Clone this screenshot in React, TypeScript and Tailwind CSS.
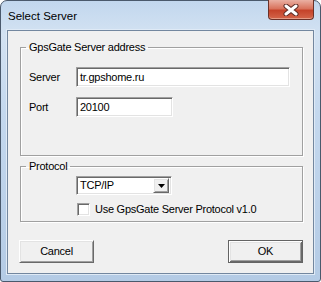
import React from "react";

const sunken =
  "border border-[#a0a0a0] border-b-white border-r-white bg-white shadow-[inset_1px_1px_0_#696969,inset_-1px_-1px_0_#e3e3e3]";

const raised =
  "border border-white border-b-[#696969] border-r-[#696969] bg-[#f0f0f0] shadow-[inset_1px_1px_0_#e3e3e3,inset_-1px_-1px_0_#a0a0a0]";

const Field: React.FC<{ label: string; value: string; width: string }> = ({
  label,
  value,
  width,
}) => (
  <div className="flex items-center pl-[8px]">
    <span className="w-[47px]">{label}</span>
    <div className={`${sunken} ${width} flex h-[20px] items-center pl-[3px]`}>
      {value}
    </div>
  </div>
);

const CloseButton = () => (
  <div className="-mt-[1px] flex h-[20px] w-[46px] items-center justify-center rounded-b-[4px] border border-t-0 border-[#6b3128] bg-[linear-gradient(#eab0a3,#d9735d_45%,#c5432a_55%,#d4654a)] shadow-[inset_0_-1px_0_#e59b86]">
    <svg width="16" height="12" viewBox="0 0 16 12">
      <path
        d="M3 2 L13 10 M13 2 L3 10"
        stroke="#5b2a24"
        strokeWidth="5"
        strokeLinecap="round"
      />
      <path
        d="M3 2 L13 10 M13 2 L3 10"
        stroke="#ffffff"
        strokeWidth="3"
        strokeLinecap="round"
      />
    </svg>
  </div>
);

export default function App() {
  return (
    <div className="h-[282px] w-[321px] bg-white font-['Liberation_Sans',Arial,sans-serif] text-[11px] leading-[13px] tracking-[-0.25px] text-black">
      <div className="flex h-[282px] w-[321px] flex-col rounded-t-[7px] rounded-b-[3px] border border-[#4a596c] bg-[linear-gradient(180deg,#c2d7ee,#d3e2f2_12%,#c4d8ee_40%,#b4cbe5)] px-[6px] pb-[7px]">
        <div className="flex h-[29px] justify-between">
          <span className="mt-[8px] pl-[1px] text-[11.5px] leading-[14px] tracking-normal">
            Select Server
          </span>
          <CloseButton />
        </div>

        <div className="flex flex-1 flex-col border border-[#73879f] bg-[#f0f0f0] pl-[11px] pr-[10px] shadow-[0_0_0_1px_#dfeaf6]">
          <fieldset className="ml-[1px] mt-[10px] border border-[#a0a0a0] pb-[38px] shadow-[inset_1px_1px_0_#fff,1px_1px_0_#fff]">
            <legend className="ml-[5px] px-[3px]">GpsGate Server address</legend>
            <div className="mt-[13px]">
              <Field label="Server" value="tr.gpshome.ru" width="w-[214px]" />
            </div>
            <div className="mt-[10px]">
              <Field label="Port" value="20100" width="w-[97px]" />
            </div>
          </fieldset>

          <fieldset className="ml-[1px] mt-[4px] border border-[#a0a0a0] pb-[5px] shadow-[inset_1px_1px_0_#fff,1px_1px_0_#fff]">
            <legend className="ml-[5px] px-[3px]">Protocol</legend>
            <div
              className={`${sunken} ml-[55px] mt-[3px] flex h-[19px] w-[96px] items-center justify-between p-[2px] pl-[3px]`}
            >
              <span>TCP/IP</span>
              <div className={`${raised} flex h-[15px] w-[16px] items-center justify-center`}>
                <svg width="7" height="4" viewBox="0 0 7 4">
                  <polygon points="0,0 7,0 3.5,4" fill="#000" />
                </svg>
              </div>
            </div>
            <label className="ml-[56px] mt-[8px] flex items-center gap-[5px]">
              <span className={`${sunken} h-[13px] w-[13px]`} />
              <span>Use GpsGate Server Protocol v1.0</span>
            </label>
          </fieldset>

          <div className="mt-[18px] flex justify-between">
            <button className={`${raised} h-[23px] w-[75px]`}>Cancel</button>
            <button className="h-[23px] w-[75px] border border-[#646464] bg-[#f0f0f0] shadow-[inset_1px_1px_0_#fff,inset_-1px_-1px_0_#696969,inset_2px_2px_0_#e3e3e3,inset_-2px_-2px_0_#a0a0a0]">
              OK
            </button>
          </div>
        </div>
      </div>
    </div>
  );
}
